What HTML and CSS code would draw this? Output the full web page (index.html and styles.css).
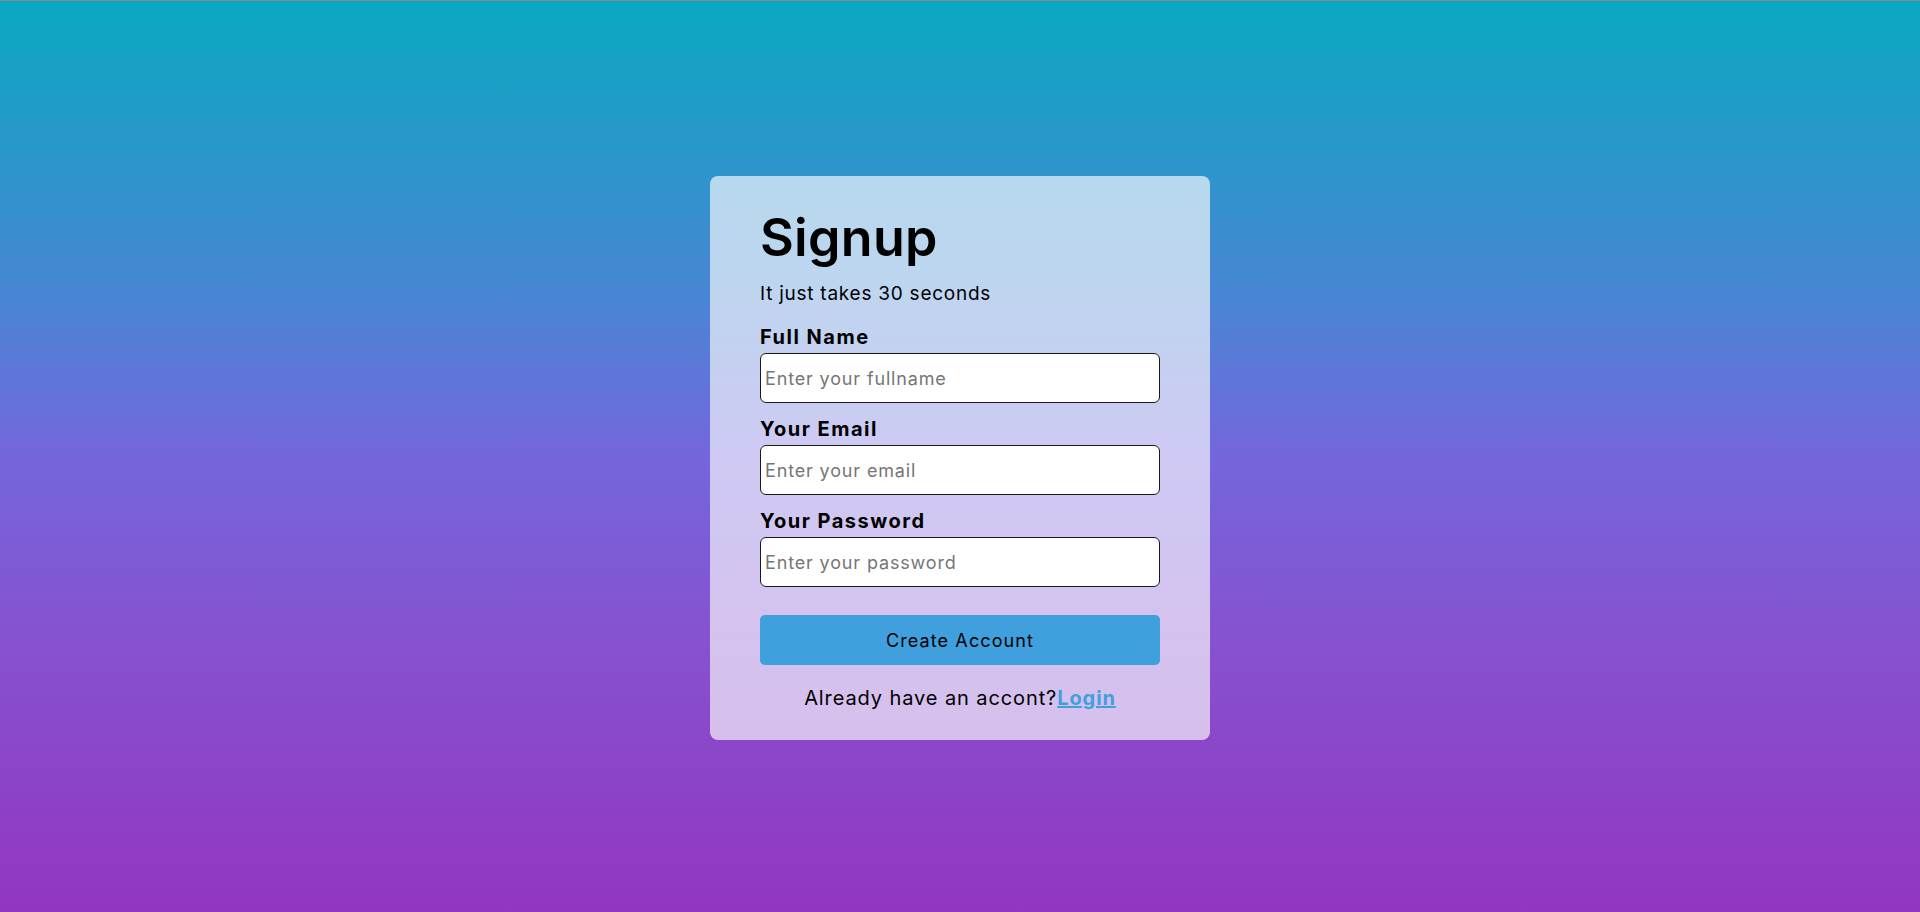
FILE: index.html
```html
<!DOCTYPE html>
<html lang="en">
<head>
<meta charset="utf-8">
<title>Signup</title>
<link rel="stylesheet" href="styles.css">
</head>
<body>
<main class="page">
  <form class="card">
    <h1 class="title">Signup</h1>
    <p class="subtitle">It just takes 30 seconds</p>
    <label class="label" for="fullname">Full Name</label>
    <input class="field" id="fullname" type="text" placeholder="Enter your fullname">
    <label class="label" for="email">Your Email</label>
    <input class="field" id="email" type="email" placeholder="Enter your email">
    <label class="label" for="password">Your Password</label>
    <input class="field" id="password" type="password" placeholder="Enter your password">
    <button class="submit" type="button">Create Account</button>
    <p class="footer">Already have an accont?<a class="login" href="#">Login</a></p>
  </form>
</main>
</body>
</html>
```
FILE: styles.css
```css
* { box-sizing: border-box; }
html, body { margin: 0; padding: 0; }
body {
  font-family: Inter, "Open Sans", sans-serif;
  color: #000;
  border-top: 1px solid #8a8a8a;
}
.page {
  height: 911px;
  padding-top: 3px;
  display: flex;
  align-items: center;
  justify-content: center;
  background: linear-gradient(to bottom, #0aa9c1 0%, #4a85d4 33%, #7466dd 50%, #8652cf 70%, #9236bf 100%);
}
.card {
  width: 500px;
  height: 564px;
  padding: 32px 50px 0;
  background: rgba(255, 255, 255, 0.65);
  border-radius: 8px;
  display: flex;
  flex-direction: column;
}
.title {
  margin: 0;
  font-size: 52px;
  font-weight: 600;
  line-height: 60px;
  letter-spacing: 0.3px;
}
.subtitle {
  margin: 14px 0 0;
  font-size: 19px;
  line-height: 24px;
  letter-spacing: 0.75px;
}
.label {
  display: block;
  font-size: 20px;
  font-weight: 700;
  line-height: 28px;
  letter-spacing: 1.5px;
  margin-top: 12px;
  margin-bottom: 2px;
}
.subtitle + .label { margin-top: 17px; }
.field {
  width: 400px;
  height: 50px;
  border: 1px solid #1a1a1a;
  border-radius: 6px;
  background: #fff;
  padding: 0 4px;
  font-family: inherit;
  font-size: 18px;
  letter-spacing: 0.85px;
  color: #000;
}
.field::placeholder { color: #767676; }
.submit {
  margin-top: 28px;
  width: 400px;
  height: 50px;
  border: none;
  border-radius: 5px;
  background: #409fdd;
  font-family: inherit;
  font-size: 18px;
  letter-spacing: 1.1px;
  color: #000;
}
.footer {
  margin: 19px 0 0;
  text-align: center;
  font-size: 20px;
  line-height: 28px;
  letter-spacing: 0.9px;
}
.login {
  color: #409fdd;
  font-weight: 700;
  text-decoration: underline;
}
```
